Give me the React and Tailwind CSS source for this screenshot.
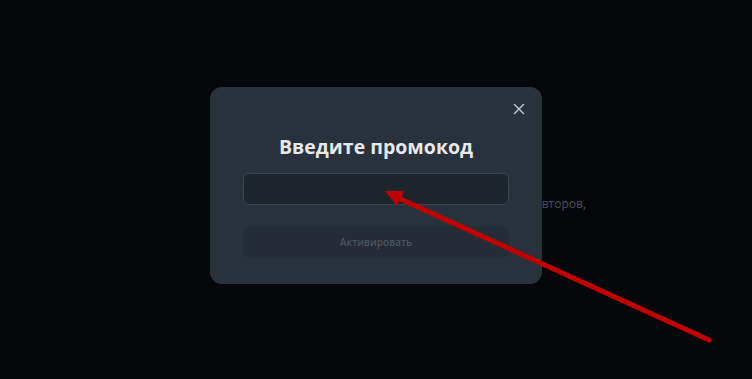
import React from 'react';

const CloseIcon = () => (
  <svg viewBox="0 0 12 12" className="h-[12px] w-[12px]" fill="none" stroke="currentColor" strokeWidth={1.4} strokeLinecap="round">
    <path d="M1.5 1.5l9 9M10.5 1.5l-9 9" />
  </svg>
);

const Arrow = () => (
  <svg className="absolute inset-0 h-full w-full pointer-events-none" viewBox="0 0 752 379">
    <line x1="709" y1="340" x2="396" y2="197" stroke="#c20000" strokeWidth="5" strokeLinecap="round" />
    <polygon points="385,191 404,191 397,206" fill="#c20000" />
  </svg>
);

export default function App() {
  return (
    <div className="relative h-[379px] w-full overflow-hidden bg-[#06070a]" style={{ fontFamily: '"Open Sans", "Noto Sans", sans-serif' }}>
      {/* Page content behind the backdrop */}
      <div className="mx-auto w-[420px] pt-[196px]">
        <p className="text-right text-[12px] leading-[16px] text-[#4b5058]">
          Подписка открывает доступ к материалам лучших авторов,
        </p>
      </div>

      {/* Modal */}
      <div className="absolute inset-0 flex justify-center pt-[87px]">
        <div className="relative h-fit w-[332px] rounded-[12px] bg-[#29323c] px-[33px] pt-[46px] pb-[26px]">
          <button className="absolute right-[17px] top-[16px] flex h-[12px] w-[12px] items-center justify-center text-[#c9cdd2]">
            <CloseIcon />
          </button>
          <h2 className="text-center text-[19.5px] font-bold leading-[28px] text-[#e6e8ea]">Введите промокод</h2>
          <input
            className="mt-[12px] block h-[32px] w-full rounded-[6px] border border-[#3b444e] bg-[#1e242c] px-3 text-[12px] text-[#e6e8ea] outline-none"
            type="text"
          />
          <button className="mt-[21px] flex h-[32px] w-full items-center justify-center rounded-[6px] bg-[#252c35] text-[10px] font-semibold text-[#4a535f]">
            Активировать
          </button>
        </div>
      </div>

      <Arrow />
    </div>
  );
}
